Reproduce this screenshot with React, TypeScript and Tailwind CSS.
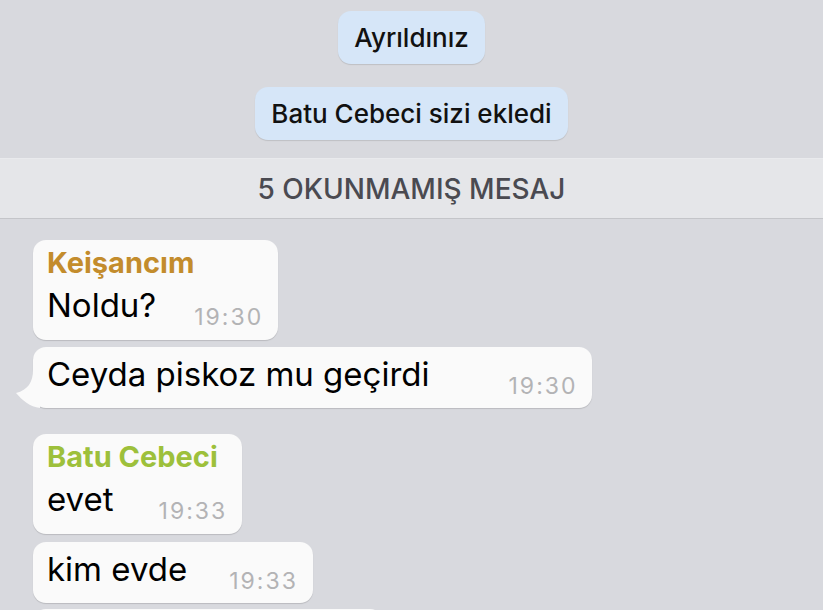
import React from "react";

const font = { fontFamily: "Inter, 'Noto Sans', sans-serif" };

function Service({ text }: { text: string }) {
  return (
    <div className="flex h-[53px] items-center rounded-[13px] bg-[#d6e6f8] px-[16px] text-[26px] font-medium text-[#111] shadow-[0_1px_1px_rgba(0,0,0,0.12)]">
      {text}
    </div>
  );
}

function Bubble({ name, nameColor, text, time, gap, tail }: { name?: string; nameColor?: string; text: string; time: string; gap: string; tail?: boolean }) {
  return (
    <div className={`relative w-fit rounded-[13px] bg-[#fafafa] pl-[14px] pr-[15px] shadow-[0_1px_1px_rgba(0,0,0,0.14)] ${name ? "pt-[5px]" : "pt-[3px]"}`}>
      {tail && (
        <svg className="absolute bottom-0 left-[-19px]" width="26" height="38" viewBox="0 0 26 38">
          <path d="M26 0 L19 0 C19 12 14 20 2 23 C8 30 16 37 26 38 Z" fill="#fafafa" />
        </svg>
      )}
      {name && (
        <div className={`text-[29px] font-bold leading-[36px] ${nameColor}`}>{name}</div>
      )}
      <div className={`flex items-end ${name ? "pb-[11px]" : "pb-[10px]"}`}>
        <span className="text-[33px] leading-[48px] text-black">{text}</span>
        <span className={`${gap} text-[23px] leading-[23px] tracking-[2px] text-[#b3b3b5]`}>{time}</span>
      </div>
    </div>
  );
}

export default function App() {
  return (
    <div className="h-[610px] w-[823px] overflow-hidden bg-[#d8d9de]" style={font}>
      <div className="flex flex-col items-center gap-[23px] pt-[11px]">
        <Service text="Ayrıldınız" />
        <Service text="Batu Cebeci sizi ekledi" />
      </div>
      <div className="mt-[18px] flex h-[61px] items-center justify-center border-t border-b border-t-[#e9eaed] border-b-[#c4c5c9] bg-[#e5e6e9] text-[28px] font-medium text-[#4a4a51]">
        5 OKUNMAMIŞ MESAJ
      </div>
      <div className="flex flex-col pl-[33px] pt-[21px]">
        <Bubble name="Keişancım" nameColor="text-[#c38c2c]" text="Noldu?" time="19:30" gap="ml-[38px]" />
        <div className="mt-[7px]">
          <Bubble text="Ceyda piskoz mu geçirdi" time="19:30" gap="ml-[79px]" tail />
        </div>
        <div className="mt-[26px]">
          <Bubble name="Batu Cebeci" nameColor="text-[#9dc03b]" text="evet" time="19:33" gap="ml-[45px]" />
        </div>
        <div className="mt-[8px]">
          <Bubble text="kim evde" time="19:33" gap="ml-[42px]" />
        </div>
        <div className="mt-[6px] h-[40px] w-[350px] rounded-[13px] bg-[#fafafa]" />
      </div>
    </div>
  );
}
